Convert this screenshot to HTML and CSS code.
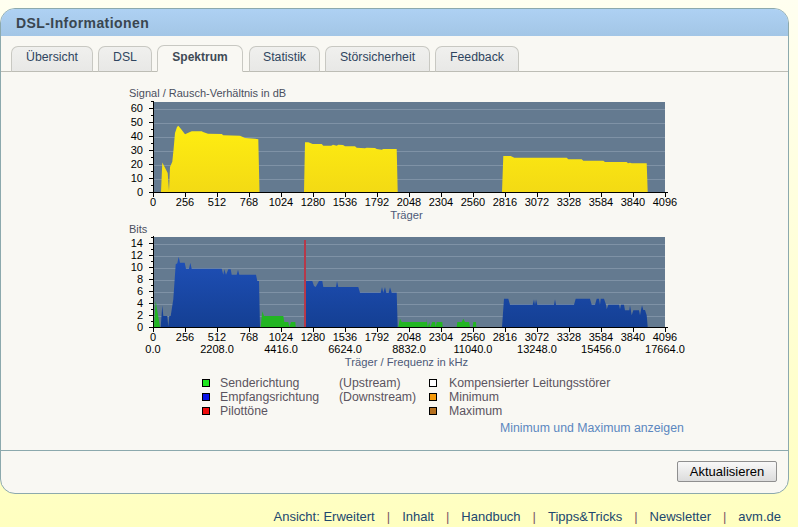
FILE: index.html
```html
<!DOCTYPE html>
<html lang="de">
<head>
<meta charset="utf-8">
<title>DSL-Informationen</title>
<link rel="stylesheet" href="styles.css">
</head>
<body>
<main class="panel">
  <header class="panel-head"><h1>DSL-Informationen</h1></header>
  <nav class="tabs">
    <a class="tab t1">Übersicht</a>
    <a class="tab t2">DSL</a>
    <a class="tab t3 active">Spektrum</a>
    <a class="tab t4">Statistik</a>
    <a class="tab t5">Störsicherheit</a>
    <a class="tab t6">Feedback</a>
  </nav>
  <section class="content">
    <svg class="charts" width="600" height="305" viewBox="120 85 600 305" xmlns="http://www.w3.org/2000/svg">
      <defs>
        <linearGradient id="yel" gradientUnits="userSpaceOnUse" x1="0" y1="125" x2="0" y2="192"><stop offset="0" stop-color="#ffee11"/><stop offset="1" stop-color="#f3da14"/></linearGradient>
        <linearGradient id="blu" gradientUnits="userSpaceOnUse" x1="0" y1="257" x2="0" y2="327"><stop offset="0" stop-color="#1f50b8"/><stop offset="1" stop-color="#143f93"/></linearGradient>
      </defs>
      <g class="ttl"><text x="129" y="97">Signal / Rausch-Verhältnis in dB</text><text x="129" y="233">Bits</text></g>

      <rect class="plot" x="154" y="102" width="511" height="90"/>
      <path class="grid" d="M154 109.5H665M154 123.5H665M154 137.5H665M154 151.5H665M154 165.5H665M154 179.5H665"/>
      <path fill="url(#yel)" d="M161 192L162.300 162.500L167.700 173L169 191L170 167L172.300 161.700L173.500 150L175 133L177 127L178.300 125.700L181 129L185 134.300L188.300 132.700L191.700 131.300L201.700 131.300L203 132L208 133.700L221.700 134L223.300 135.300L240 135.700L245 138L255 138.700L258.300 139.300L259.500 192Z"/>
      <path fill="url(#yel)" d="M304 192L305 142.300L308.300 142.300L312.700 144L321.700 144L323.300 145.700L331.300 145.700L333 144.700L336.700 145.700L338.300 144.700L343 145L345 146.300L355 146.300L356.700 147.700L365 148.300L366.700 147.700L375 148L376.700 149L381.700 149.700L383.300 149L396.700 149L397.700 192Z"/>
      <path fill="url(#yel)" d="M502 192L503.300 156L510.700 156L514.300 157.700L566.700 157.700L568.300 159.300L581.700 159.300L583.300 160.700L603.300 160.700L605 162L626.700 162L628 163.300L630 162.700L631.700 163.300L646.700 163.300L647.700 192Z"/>
      <path class="ax" d="M153.500 101V192.500M153 192.500H668"/>
      <path class="ax" d="M149 108.500h4M149 122.500h4M149 136.500h4M149 150.500h4M149 164.500h4M149 178.500h4M149 192.500h4"/>
      <path class="ax" d="M151 115.500h2M151 129.500h2M151 143.500h2M151 157.500h2M151 171.500h2M151 185.500h2M151 101.500h2"/>
      <path class="ax" d="M153.500 193v4M185.500 193v4M217.500 193v4M249.500 193v4M281.500 193v4M313.500 193v4M345.500 193v4M377.500 193v4M409.500 193v4M441.500 193v4M473.500 193v4M505.500 193v4M537.500 193v4M569.500 193v4M601.500 193v4M633.500 193v4M665.500 193v4"/>
      <g class="ylab"><text x="143" y="112">60</text><text x="143" y="126">50</text><text x="143" y="140">40</text><text x="143" y="154">30</text><text x="143" y="168">20</text><text x="143" y="182">10</text><text x="143" y="196">0</text></g>
      <g class="xlab"><text x="153" y="206">0</text><text x="185" y="206">256</text><text x="217" y="206">512</text><text x="249" y="206">768</text><text x="281" y="206">1024</text><text x="313" y="206">1280</text><text x="345" y="206">1536</text><text x="377" y="206">1792</text><text x="409" y="206">2048</text><text x="441" y="206">2304</text><text x="473" y="206">2560</text><text x="505" y="206">2816</text><text x="537" y="206">3072</text><text x="569" y="206">3328</text><text x="601" y="206">3584</text><text x="633" y="206">3840</text><text x="665" y="206">4096</text></g>
      <text class="axt" x="406.500" y="219">Träger</text>

      <rect class="plot" x="154" y="237" width="511" height="90"/>
      <path class="grid" d="M154 244.500H665M154 256.500H665M154 268.500H665M154 280.500H665M154 292.500H665M154 304.500H665M154 316.500H665"/>
      <path fill="#22b522" d="M154 327L155.700 301L160 327ZM260.700 327L262.300 311.300L264 316L283.300 316L284.300 322L288.300 322L289.300 327L291 322L295.300 322L295.700 327Z"/>
      <path fill="#22b522" d="M398.300 327L400 318.700L401.700 322L426.700 322L426.700 318.700L427.700 327L429.300 322L430.300 327L432.300 322L435 322L435.700 327L436.700 322L442.300 322L442.700 327ZM456.700 327L457.300 322L461.700 322L463.300 318.700L465 322L469 322L470 327ZM472.700 327L473.300 322L476 322L476.300 327Z"/>
      <path fill="url(#blu)" d="M160.700 327L162.300 305.300L163.300 316L167.300 316L168.300 326.700L169.300 316L170.700 316L173.300 299.300L175.700 264.300L177.300 263.300L178.700 256.700L180 262.700L184.700 262.700L186 268.700L189 268.700L190.300 262.700L191.700 268.700L221.700 268.700L223.300 274.700L224.300 269.300L226 274.700L228.300 269.300L230.700 269.300L231.700 274.700L236.700 274.700L238 269.700L239.300 274.700L256 274.700L257.300 281L259 281L260 327Z"/>
      <path fill="url(#blu)" d="M304.300 327L306 281L312.300 281L314 286L315.700 287L319 281L322.300 281L323.300 287L336 287L337 281L338.300 287L358.300 287L360 292.700L380.700 292.700L382 287L383.300 292.700L385 287L386.300 292.700L388.700 292.700L390 287.300L391.700 292.700L396.700 292.700L397.700 327Z"/>
      <path fill="url(#blu)" d="M502 327L504 298.700L508.300 298.700L510 304.700L532.700 304.700L534 299.300L535 304.700L536 299.300L537.300 304.700L554 304.700L555 299.300L556 304.700L574 304.700L575.700 298.700L590 298.700L591.700 304.700L595 304.700L596.700 298.700L599 298.700L600 304.700L600.700 298.700L604 298.700L606 304.700L606.700 309.300L608.300 304.700L619 304.700L620 309.300L621 304.700L624 304.700L625 310.300L629.300 310.300L630 305.300L631.700 315.300L633.300 310.300L639 310.300L640 315.300L641 310L642 305.300L643.300 310L645 310L646.700 315.300L647.700 327Z"/>
      <rect x="304" y="240" width="2" height="87" fill="#b5394a"/>
      <path class="ax" d="M153.500 236V327.500M153 327.500H668"/>
      <path class="ax" d="M149 243.500h4M149 255.500h4M149 267.500h4M149 279.500h4M149 291.500h4M149 303.500h4M149 315.500h4M149 327.500h4"/>
      <path class="ax" d="M151 237.500h2M151 249.500h2M151 261.500h2M151 273.500h2M151 285.500h2M151 297.500h2M151 309.500h2M151 321.500h2"/>
      <path class="ax" d="M153.500 328v4M185.500 328v4M217.500 328v4M249.500 328v4M281.500 328v4M313.500 328v4M345.500 328v4M377.500 328v4M409.500 328v4M441.500 328v4M473.500 328v4M505.500 328v4M537.500 328v4M569.500 328v4M601.500 328v4M633.500 328v4M665.500 328v4"/>
      <g class="ylab"><text x="143" y="247">14</text><text x="143" y="259">12</text><text x="143" y="271">10</text><text x="143" y="283">8</text><text x="143" y="295">6</text><text x="143" y="307">4</text><text x="143" y="319">2</text><text x="143" y="331">0</text></g>
      <g class="xlab"><text x="153" y="341">0</text><text x="185" y="341">256</text><text x="217" y="341">512</text><text x="249" y="341">768</text><text x="281" y="341">1024</text><text x="313" y="341">1280</text><text x="345" y="341">1536</text><text x="377" y="341">1792</text><text x="409" y="341">2048</text><text x="441" y="341">2304</text><text x="473" y="341">2560</text><text x="505" y="341">2816</text><text x="537" y="341">3072</text><text x="569" y="341">3328</text><text x="601" y="341">3584</text><text x="633" y="341">3840</text><text x="665" y="341">4096</text></g>
      <g class="xlab"><text x="153" y="353">0.0</text><text x="217" y="353">2208.0</text><text x="281" y="353">4416.0</text><text x="345" y="353">6624.0</text><text x="409" y="353">8832.0</text><text x="473" y="353">11040.0</text><text x="537" y="353">13248.0</text><text x="601" y="353">15456.0</text><text x="665" y="353">17664.0</text></g>
      <text class="axt" x="406.500" y="366">Träger / Frequenz in kHz</text>
    </svg>
    <div class="legend">
      <div class="leg-row"><i class="sw green"></i><span class="l1">Senderichtung</span><span class="l2">(Upstream)</span><i class="sw white"></i><span class="l3">Kompensierter Leitungsstörer</span></div>
      <div class="leg-row"><i class="sw blue"></i><span class="l1">Empfangsrichtung</span><span class="l2">(Downstream)</span><i class="sw orange"></i><span class="l3">Minimum</span></div>
      <div class="leg-row"><i class="sw red"></i><span class="l1">Pilottöne</span><span class="l2"></span><i class="sw brown"></i><span class="l3">Maximum</span></div>
    </div>
    <a class="minmax">Minimum und Maximum anzeigen</a>
  </section>
  <footer class="actions"><button class="btn" type="button">Aktualisieren</button></footer>
</main>
<nav class="foot">
  <a>Ansicht: Erweitert</a><span>|</span><a>Inhalt</a><span>|</span><a>Handbuch</a><span>|</span><a>Tipps&amp;Tricks</a><span>|</span><a>Newsletter</a><span>|</span><a>avm.de</a>
</nav>
</body>
</html>
```
FILE: styles.css
```css
* { box-sizing: border-box; }
html, body { margin: 0; padding: 0; }
body { width: 798px; height: 527px; overflow: hidden; background: linear-gradient(#fffff0, #ffffc0); font-family: "Liberation Sans", Arial, sans-serif; font-size: 12.3px; color: #3f4a55; padding-top: 8px; }
.panel { width: 789px; height: 486px; background: #f9f8f3; border: 1px solid #8ca9ad; border-radius: 15px; display: flex; flex-direction: column; overflow: hidden; }
.panel-head { height: 27px; background: linear-gradient(#aed1f3, #a3c6e6); padding: 6px 0 0 15px; flex: none; }
h1 { margin: 0; font-size: 14px; line-height: 17px; font-weight: bold; color: #3a4650; letter-spacing: .42px; }
.tabs { height: 36px; padding: 9px 0 0 10px; display: flex; gap: 5px; align-items: flex-end; border-bottom: 1px solid #bdbdb5; flex: none; }
.tab { height: 26px; margin-bottom: -1px; border: 1px solid #c8c8c2; border-bottom-color: #bdbdb5; border-radius: 7px 7px 0 0; background: linear-gradient(#f0f0ee, #e8e8e6); color: #2f4560; text-align: center; line-height: 21px; }
.tab.active { height: 27px; background: #f9f8f3; border-bottom-color: #f9f8f3; font-weight: bold; font-size: 12px; line-height: 22px; color: #3f4a55; margin-right: 1px; }
.t1 { width: 82px; } .t2 { width: 54px; } .t3 { width: 86px; } .t4 { width: 71px; } .t5 { width: 105px; } .t6 { width: 84px; }
.content { flex: 1; display: flex; flex-direction: column; position: relative; padding: 0; min-height: 0; border-bottom: 1px solid #8ca9ad; }
.charts { display: block; margin: 13px 0 0 119px; flex: none; }
.charts text { font-family: "Liberation Sans", Arial, sans-serif; font-size: 11px; }
.plot { fill: #647a90; }
.grid { stroke: #7f92a6; stroke-width: 1; fill: none; }
.ax { stroke: #000; stroke-width: 1; fill: none; }
.ttl text { fill: #4a4f5e; }
.ylab text { fill: #000; text-anchor: end; }
.xlab text { fill: #000; text-anchor: middle; }
.charts .axt { fill: #4d5a78; text-anchor: middle; font-size: 11.200px; }
.legend { margin: -14px 0 0 201px; display: flex; flex-direction: column; }
.leg-row { height: 14px; display: flex; align-items: center; color: #5b5460; }
.sw { width: 8px; height: 8px; border: 1px solid #000; flex: none; }
.green { background: #1fe61f; } .blue { background: #0a14e6; } .red { background: #f00d0d; } .white { background: #fff; } .orange { background: #f59a0a; } .brown { background: #b5701f; }
.l1 { margin-left: 10px; width: 119px; } .l2 { width: 90px; } .l3 { margin-left: 12px; }
.minmax { margin: 3px 0 0 499px; color: #5b87bf; line-height: 14px; }
.actions { height: 42px; flex: none; display: flex; justify-content: flex-end; align-items: center; padding: 0 11px 2px 0; }
.btn { width: 100px; height: 21px; padding: 0; border: 1px solid #8f8f8f; border-radius: 2px; background: linear-gradient(#f8f8f8, #dcdcdc); font: 13px "Liberation Sans", Arial, sans-serif; color: #000; }
.foot { height: 33px; display: flex; justify-content: flex-end; align-items: center; padding: 11px 17px 0 0; gap: 12px; color: #21476f; font-size: 13px; }
.foot span { color: #7c5866; }
```
